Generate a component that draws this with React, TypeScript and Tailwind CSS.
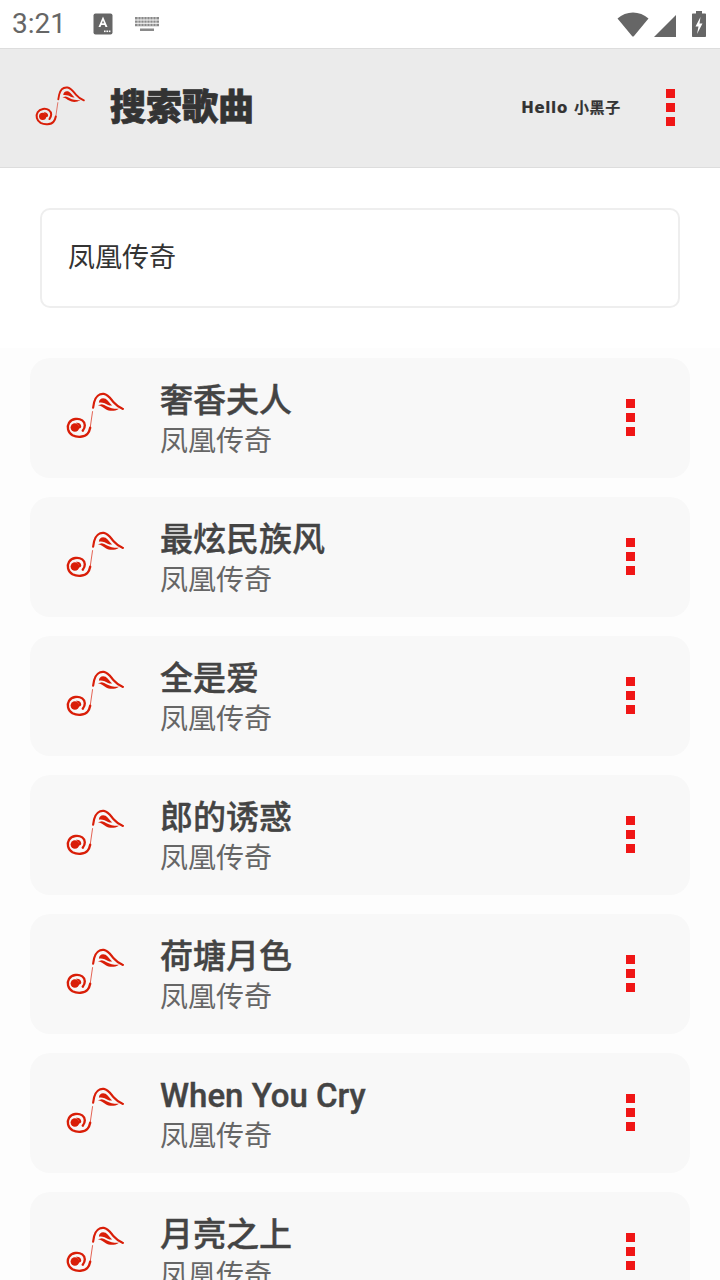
const songs = ["奢香夫人", "最炫民族风", "全是爱", "郎的诱惑", "荷塘月色", "When You Cry", "月亮之上"];

const cjk = "font-['Roboto','Noto_Sans_CJK_SC',sans-serif]";

function Logo({ className }: { className: string }) {
  return (
    <svg viewBox="0 0 60 50" className={className}>
      <g fill="none" stroke="#d91e08" strokeLinecap="round">
        <path d="M18 40.5C20.8 37 21 32.5 17.5 30C13.5 27.3 6.8 28 4 32.5C1.5 36.5 2.8 42.5 7.5 45.2C12 47.5 20 47.5 23 43.5C24.6 41.5 25.2 39.5 25.6 37.5" strokeWidth="2.4" />
        <path d="M25.6 37.5L28 21" strokeWidth="0.7" />
        <path d="M28.6 17L29.6 11.5C31 5.5 35 2.5 39.5 3C44 3.7 46.5 8 49.5 11.5C52 14.5 55.5 16.8 59 18.3" strokeWidth="2.2" />
      </g>
      <circle cx="10" cy="37.3" r="4.4" fill="#d91e08" />
      <path d="M11 32.5C14 32 16.5 33.5 16.5 36.5C16 38 15 38.5 14 38C14.3 35.5 13 33.8 11 32.5Z" fill="#d91e08" />
      <path d="M34.5 12C34.5 8 38 6.5 41.3 8C44 9.5 45.5 12.8 48 14.8C44.5 15.2 42.5 13.2 40.3 12.4C38 11.7 36 11.6 34.5 12Z" fill="#d91e08" />
      <path d="M33.5 14.5L37.5 13.6C41 14.5 43.5 16.8 47.5 17.6C51 18.3 53 18.2 55 18C50.5 21 45 20.8 41.5 18.6C39 17 36.5 15 33.5 14.5Z" fill="#d91e08" />
    </svg>
  );
}

function Dots() {
  return (
    <div className="flex flex-col gap-[5px]">
      <div className="h-[9px] w-[9px] bg-[#f01616]" />
      <div className="h-[9px] w-[9px] bg-[#f01616]" />
      <div className="h-[9px] w-[9px] bg-[#f01616]" />
    </div>
  );
}

function StatusBar() {
  return (
    <div className="flex h-[48px] items-center bg-white pl-[12px] pr-[14px] text-[#666666]">
      <span className="w-[81px] font-['Roboto',sans-serif] text-[28px] leading-none">3:21</span>
      <svg viewBox="0 0 20 22" className="h-[22px] w-[20px]">
        <rect x="0.5" y="0.5" width="19" height="21" rx="2" fill="#666666" />
        <path d="M5.5 14L10 3.5L14.5 14H12.5L11.6 12H8.4L7.5 14ZM9 10.3H11L10 7.5Z" fill="#fff" />
        <rect x="11" y="17.5" width="1.6" height="1.6" fill="#fff" />
        <rect x="13.4" y="17.5" width="1.6" height="1.6" fill="#fff" />
        <rect x="15.8" y="17.5" width="1.6" height="1.6" fill="#fff" />
      </svg>
      <svg viewBox="0 0 24 14" className="ml-[22px] h-[14px] w-[24px]" fill="#8a8a8a">
        <path d="M0 0H24V2.4H0ZM0 3.4H24V5.8H0ZM0 6.8H24V9.2H0ZM5 11.5H19V14H5Z" />
        <path d="M3 0V9M6 0V9M9 0V9M12 0V9M15 0V9M18 0V9M21 0V9" stroke="#fff" strokeWidth="0.6" />
      </svg>
      <div className="ml-auto flex items-center">
        <svg viewBox="0 0 32 25" className="h-[25px] w-[32px]">
          <path d="M0.5 6.5C9 -1.5 23 -1.5 31.5 6.5L17 24C16.4 24.8 15.6 24.8 15 24Z" fill="#666666" />
        </svg>
        <svg viewBox="0 0 22 22" className="ml-[5px] mt-[3px] h-[22px] w-[22px]">
          <path d="M22 0V22H0Z" fill="#666666" />
        </svg>
        <svg viewBox="0 0 14 26" className="ml-[16px] h-[26px] w-[14px]">
          <path d="M4 0H10V2.5H13C13.6 2.5 14 2.9 14 3.5V25C14 25.6 13.6 26 13 26H1C0.4 26 0 25.6 0 25V3.5C0 2.9 0.4 2.5 1 2.5H4Z" fill="#666666" />
          <path d="M8.5 6L3.5 15.5H6.5L5 23L10.5 12.5H7.5Z" fill="#fff" />
        </svg>
      </div>
    </div>
  );
}

function Header() {
  return (
    <div className="flex h-[120px] items-center border-y border-[#dddddd] bg-[#ebebeb] pl-[34px] pr-[45px]">
      <Logo className="mt-[-5px] h-[42px] w-[51px]" />
      <h1 className={`ml-[25px] text-[36px] font-black leading-none text-[#333333] [-webkit-text-stroke:0.7px_#333333] ${cjk}`}>搜索歌曲</h1>
      <span className="ml-auto mr-[45px] font-['DejaVu_Sans','Noto_Sans_CJK_SC',sans-serif] text-[15px] font-bold tracking-[0.7px] text-[#333333] [-webkit-text-stroke:0.2px_#333333]">Hello 小黑子</span>
      <div className="mt-[-2px]">
        <Dots />
      </div>
    </div>
  );
}

function SongCard({ title }: { title: string }) {
  return (
    <div className="flex h-[120px] shrink-0 items-center rounded-[20px] bg-[#f8f8f8] pl-[35px] pr-[55px]">
      <Logo className="mt-[-6px] h-[49px] w-[59px] shrink-0" />
      <div className={`ml-[36px] flex-1 ${cjk}`}>
        <div className="text-[33px] font-medium leading-[48px] text-[#444444] [-webkit-text-stroke:0.4px_#444444]">{title}</div>
        <div className="text-[28px] leading-[34px] text-[#666666]">凤凰传奇</div>
      </div>
      <div className="mt-[-2px]">
        <Dots />
      </div>
    </div>
  );
}

export default function App() {
  return (
    <div className="h-[1280px] w-[720px] overflow-hidden bg-[#fdfdfd]">
      <StatusBar />
      <Header />
      <div className="bg-white px-[40px] py-[40px]">
        <div className={`flex h-[100px] items-center rounded-[10px] border-2 border-[#eeeeee] bg-white pl-[26px] text-[27px] text-[#333333] ${cjk}`}>
          凤凰传奇
        </div>
      </div>
      <div className="flex flex-col gap-[19px] px-[30px] pt-[10px]">
        {songs.map((s) => (
          <SongCard key={s} title={s} />
        ))}
      </div>
    </div>
  );
}
